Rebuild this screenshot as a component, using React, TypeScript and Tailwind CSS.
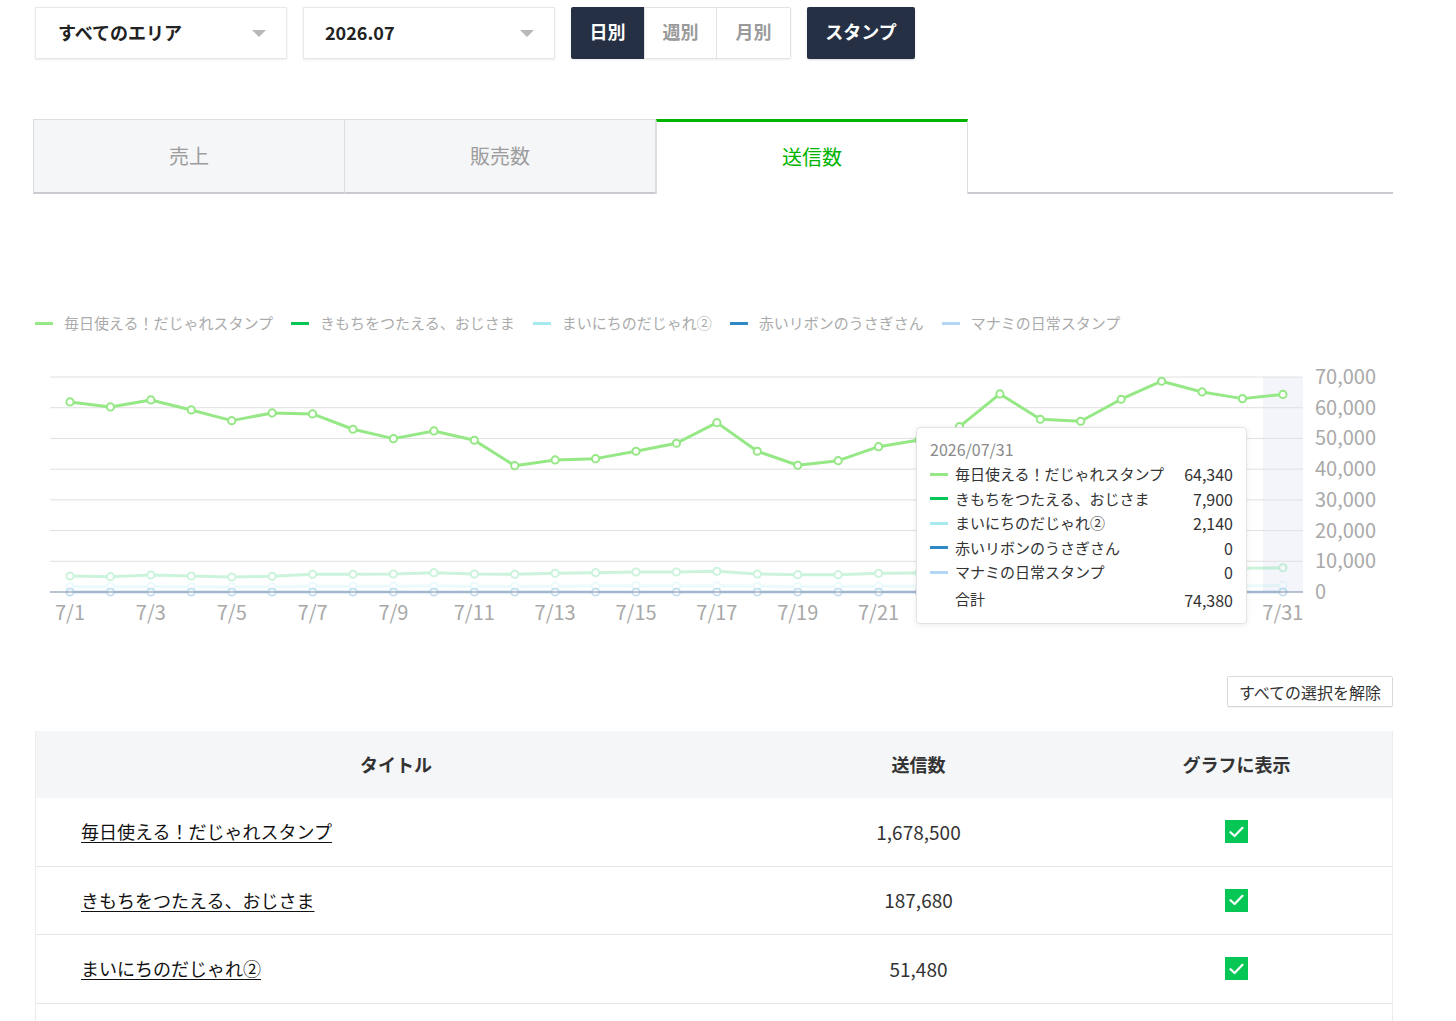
import React from 'react';

interface Series {
  name: string;
  color: string;
  values: number[];
  faded?: boolean;
  last: number;
}

const s1 = [61880, 60250, 62530, 59280, 55790, 58300, 57970, 52990, 49930, 52440, 49410, 41140, 42990, 43420, 45830, 48430, 55140, 45830, 41270, 42760, 47320, 49500, 53840, 64490, 56250, 55600, 62760, 68620, 65140, 62960, 64340];
const s2 = [5210, 4990, 5540, 5210, 4890, 5100, 5760, 5760, 5860, 6300, 5860, 5760, 6080, 6300, 6510, 6510, 6730, 5860, 5650, 5650, 6080, 6200, 6400, 6700, 6900, 7000, 7200, 7300, 7500, 7700, 7900];
const s3 = [1700, 1750, 1800, 1700, 1650, 1700, 1850, 1800, 1900, 1950, 1850, 1800, 1900, 1950, 2000, 1950, 2050, 1850, 1750, 1800, 1900, 1900, 1950, 2000, 1900, 1950, 2000, 1950, 1900, 1950, 2140];
const zeros = Array.from({ length: 31 }, () => 0);

const series: Series[] = [
  { name: '毎日使える！だじゃれスタンプ', color: '#95e885', values: s1, last: 64340 },
  { name: 'きもちをつたえる、おじさま', color: '#06c755', values: s2, faded: true, last: 7900 },
  { name: 'まいにちのだじゃれ②', color: '#a6e9ee', values: s3, faded: true, last: 2140 },
  { name: '赤いリボンのうさぎさん', color: '#2f87c5', values: zeros, faded: true, last: 0 },
  { name: 'マナミの日常スタンプ', color: '#b3d6f6', values: zeros, faded: true, last: 0 },
];

const rows = [
  { title: '毎日使える！だじゃれスタンプ', count: '1,678,500' },
  { title: 'きもちをつたえる、おじさま', count: '187,680' },
  { title: 'まいにちのだじゃれ②', count: '51,480' },
];

const xFor = (i: number) => 70 + i * 40.43;
const yFor = (v: number) => 592 - (v * 215) / 70000;

// labels hidden under the tooltip are not drawn
const xLabels = [0, 2, 4, 6, 8, 10, 12, 14, 16, 18, 20, 30];

const Caret: React.FC = () => (
  <span className="w-0 h-0 border-x-[7px] border-x-transparent border-t-[7px] border-t-[#b8b8b8]" />
);

const Check: React.FC = () => (
  <span className="w-[23px] h-[23px] bg-[#06c755] flex items-center justify-center">
    <svg width="15" height="12" viewBox="0 0 15 12" fill="none">
      <path d="M1.5 6.2 L5.6 10 L13.5 1.8" stroke="#fff" strokeWidth="2.2" strokeLinecap="round" strokeLinejoin="round" />
    </svg>
  </span>
);

const Chart: React.FC = () => {
  const grid = [0, 10000, 20000, 30000, 40000, 50000, 60000, 70000];
  return (
    <div className="relative w-[1360px] h-[270px]">
      <svg width="1360" height="270" viewBox="33 360 1360 270" className="block">
        <rect x="1263" y="377" width="40" height="215" fill="#f3f5fa" />
        {grid.map(g => (
          <g key={g}>
            {g > 0 && <line x1="50" x2="1303" y1={yFor(g)} y2={yFor(g)} stroke="#e0e0e0" strokeWidth="1" />}
            <text x="1315" y={yFor(g) + 7} fontSize="20" fill="#a9a9a9" fontFamily="'Noto Sans CJK JP', sans-serif">
              {g.toLocaleString('en-US')}
            </text>
          </g>
        ))}
        {[...series].reverse().map(s => {
          const pts = s.values.map((v, i) => `${xFor(i)},${yFor(v)}`).join(' ');
          return (
            <g key={s.name} opacity={s.faded ? 0.2 : 1}>
              <polyline points={pts} fill="none" stroke={s.color} strokeWidth="3" strokeLinejoin="round" />
              {s.values.map((v, i) => (
                <circle key={i} cx={xFor(i)} cy={yFor(v)} r="3.6" fill="#fff" stroke={s.color} strokeWidth="2" />
              ))}
            </g>
          );
        })}
        <line x1="50" x2="1303" y1="592" y2="592" stroke="#8c9bb0" strokeWidth="1.5" opacity="0.8" />
        {xLabels.map(i => (
          <text key={i} x={xFor(i)} y="620" textAnchor="middle" fontSize="20" fill="#a9a9a9" fontFamily="'Noto Sans CJK JP', sans-serif">
            {`7/${i + 1}`}
          </text>
        ))}
      </svg>

      <div className="absolute left-[883px] top-[67px] w-[331px] h-[197px] bg-white border border-[#e3e3e3] rounded-[4px] shadow-[0_1px_6px_rgba(0,0,0,0.08)] px-[13px] pt-[9px]">
        <div className="text-[16px] leading-[24px] text-[#8a8a8a]">2026/07/31</div>
        <div className="mt-[1px]">
          {series.map(s => (
            <div key={s.name} className="flex items-center h-[24.5px] text-[15px] text-[#333]">
              <span className="w-[18px] h-[3px] mr-[7px]" style={{ backgroundColor: s.color }} />
              <span className="flex-1">{s.name}</span>
              <span className="text-[16px]">{s.last.toLocaleString('en-US')}</span>
            </div>
          ))}
          <div className="flex items-center h-[30px] text-[15px] text-[#333] pl-[25px]">
            <span className="flex-1">合計</span>
            <span className="text-[16px]">74,380</span>
          </div>
        </div>
      </div>
    </div>
  );
};

const App: React.FC = () => {
  return (
    <div className="min-h-screen bg-white font-['Noto_Sans_CJK_JP',sans-serif] text-[#222]">
      <div className="flex items-center gap-4 pt-[7px] pl-[35px]">
        <div className="w-[252px] h-[52px] bg-white border border-[#e8e8e8] shadow-[0_1px_2px_rgba(0,0,0,0.08)] flex items-center justify-between pl-[22px] pr-[20px]">
          <span className="text-[18px] leading-[24px] font-bold -mt-[3px]">すべてのエリア</span>
          <Caret />
        </div>
        <div className="w-[252px] h-[52px] bg-white border border-[#e8e8e8] shadow-[0_1px_2px_rgba(0,0,0,0.08)] flex items-center justify-between pl-[21px] pr-[20px]">
          <span className="text-[18px] leading-[24px] font-bold -mt-[3px]">2026.07</span>
          <Caret />
        </div>
        <div className="flex h-[52px] shadow-[0_1px_2px_rgba(0,0,0,0.08)]">
          <button className="w-[73px] bg-[#253044] text-white text-[18px] font-bold rounded-l-[2px] pb-[3px]">日別</button>
          <button className="w-[73px] bg-white text-[#9a9a9a] text-[18px] font-bold border border-[#e3e3e3] pb-[3px]">週別</button>
          <button className="w-[74px] bg-white text-[#9a9a9a] text-[18px] font-bold border border-l-0 border-[#e3e3e3] rounded-r-[2px] pb-[3px]">月別</button>
        </div>
        <button className="w-[108px] h-[52px] bg-[#253044] text-white text-[18px] font-bold rounded-[2px] shadow-[0_1px_2px_rgba(0,0,0,0.15)] pb-[3px]">スタンプ</button>
      </div>

      <div className="ml-[33px] w-[1360px]">
        <div className="flex mt-[60px] h-[75px]">
          <div className="w-[312px] bg-[#f5f6f8] border border-[#dedede] border-b-2 border-b-[#c9cbd0] flex items-center justify-center text-[20px] text-[#9d9d9d]">売上</div>
          <div className="w-[311px] bg-[#f5f6f8] border border-l-0 border-[#dedede] border-b-2 border-b-[#c9cbd0] flex items-center justify-center text-[20px] text-[#9d9d9d]">販売数</div>
          <div className="w-[312px] bg-white border-x border-[#dedede] border-t-[3px] border-t-[#00b400] flex items-center justify-center text-[20px] text-[#00b400] pb-[2px]">送信数</div>
          <div className="flex-1 border-b-2 border-b-[#c9cbd0]" />
        </div>

        <div className="flex items-center h-[20px] mt-[119px] pl-[2px] gap-[18px]">
          {series.map(s => (
            <div key={s.name} className="flex items-center">
              <span className="w-[18px] h-[3px] mr-[11px]" style={{ backgroundColor: s.color }} />
              <span className="text-[15px] text-[#ababab]">{s.name}</span>
            </div>
          ))}
        </div>

        <div className="mt-[27px]">
          <Chart />
        </div>

        <div className="flex justify-end mt-[46px]">
          <button className="h-[31px] w-[166px] border border-[#d9d9d9] rounded-[2px] bg-white text-[16px] text-[#333] shadow-[0_1px_1px_rgba(0,0,0,0.05)]">すべての選択を解除</button>
        </div>

        <div className="mt-[24px] ml-[2px] border-x border-[#ececec]">
          <div className="grid grid-cols-[720px_325px_1fr] h-[67px] bg-[#f5f6f8] items-center text-[18px] font-bold text-[#333]">
            <div className="text-center">タイトル</div>
            <div className="text-center">送信数</div>
            <div className="text-center">グラフに表示</div>
          </div>
          {rows.map(r => (
            <div key={r.title} className="grid grid-cols-[720px_325px_1fr] h-[68.5px] items-center border-b border-[#e6e6e6]">
              <div className="pl-[45px]">
                <a href="#" className="text-[18px] text-[#111] underline underline-offset-[3px]">{r.title}</a>
              </div>
              <div className="text-center text-[19px] text-[#333]">{r.count}</div>
              <div className="flex justify-center">
                <Check />
              </div>
            </div>
          ))}
          <div className="h-[60px]" />
        </div>
      </div>
    </div>
  );
};

export default App;
